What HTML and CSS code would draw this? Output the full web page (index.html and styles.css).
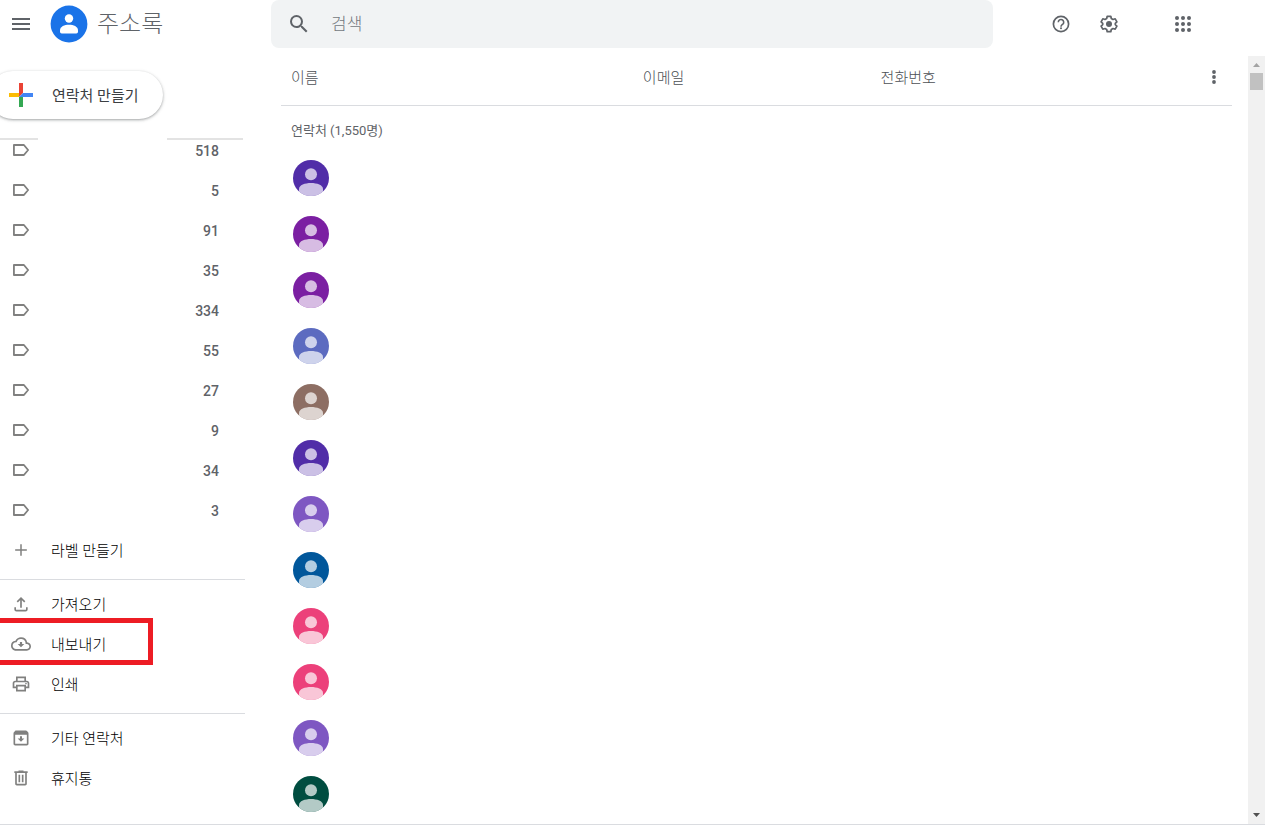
FILE: index.html
```html
<!DOCTYPE html>
<html lang="ko">
<head>
<meta charset="utf-8">
<title>주소록</title>
<link rel="stylesheet" href="styles.css">
</head>
<body>
<svg class="defs" aria-hidden="true">
  <symbol id="label" viewBox="0 0 24 24"><path d="M3.500 6h12L20.500 12l-5 6h-12z" fill="none" stroke="currentColor" stroke-width="2.200" stroke-linejoin="round"/></symbol>
  <symbol id="person" viewBox="0 0 36 36"><circle cx="18" cy="14.300" r="6"/><path d="M6 36v-7c0-4 6-6 12-6s12 2 12 6v7z"/></symbol>
</svg>
<div class="app">
  <header class="topbar">
    <div class="brand">
      <button class="icon-button" aria-label="기본 메뉴"><svg viewBox="0 0 24 24"><path d="M3 18h18v-2H3zm0-5h18v-2H3zm0-7v2h18V6z"/></svg></button>
      <svg class="logo" viewBox="0 0 38 38"><circle cx="19" cy="19" r="18.400" fill="#1a73e8"/><circle cx="19" cy="13.500" r="4.200" fill="#fff"/><path d="M10 25.500c0-4 4.500-5.700 9-5.700s9 1.700 9 5.700v1.300q0 1.700-1.700 1.700H11.700Q10 28.500 10 26.800z" fill="#fff"/></svg>
      <h1 class="title">주소록</h1>
    </div>
    <label class="search">
      <svg viewBox="0 0 24 24"><path d="M15.500 14h-.79l-.28-.27A6.471 6.471 0 0 0 16 9.500 6.500 6.500 0 1 0 9.500 16c1.610 0 3.090-.59 4.230-1.570l.27.28v.79l5 4.990L20.490 19zm-6 0C7.010 14 5 11.990 5 9.500S7.010 5 9.500 5 14 7.010 14 9.500 11.990 14 9.500 14z"/></svg>
      <input type="text" placeholder="검색" aria-label="검색">
    </label>
    <div class="actions">
      <button class="icon-button" aria-label="도움말"><svg viewBox="0 0 24 24"><circle cx="12" cy="12" r="7.600" fill="none" stroke="currentColor" stroke-width="1.700"/><path d="M9.300 10.200a2.700 2.700 0 1 1 4.500 2c-1.100.9-1.800 1.300-1.800 2.500" fill="none" stroke="currentColor" stroke-width="1.600"/><circle cx="12" cy="16.200" r="1"/></svg></button>
      <button class="icon-button" aria-label="설정"><svg viewBox="0 0 24 24"><path d="M10.200 4.300h3.600l.5 2.200 1.700 1 2.200-.7 1.700 3-1.600 1.500v1.400l1.600 1.500-1.700 3-2.200-.7-1.700 1-.5 2.200h-3.600l-.5-2.200-1.700-1-2.200.7-1.700-3 1.600-1.500v-1.400L4.100 9.800l1.700-3 2.200.7 1.700-1z" fill="none" stroke="currentColor" stroke-width="1.700" stroke-linejoin="round"/><circle cx="12" cy="12" r="3"/></svg></button>
      <button class="icon-button apps" aria-label="앱"><svg viewBox="0 0 24 24"><circle cx="6" cy="6" r="2"/><circle cx="12" cy="6" r="2"/><circle cx="18" cy="6" r="2"/><circle cx="6" cy="12" r="2"/><circle cx="12" cy="12" r="2"/><circle cx="18" cy="12" r="2"/><circle cx="6" cy="18" r="2"/><circle cx="12" cy="18" r="2"/><circle cx="18" cy="18" r="2"/></svg></button>
    </div>
  </header>

  <div class="body">
    <nav class="sidebar">
      <button class="create">
        <svg viewBox="0 0 24 24"><path fill="#ea4335" d="M10 0h4v10l-4 4z"/><path fill="#fbbc04" d="M0 10h10v4H0z"/><path fill="#4285f4" d="M14 10h10v4H10z"/><path fill="#34a853" d="M10 14h4v10h-4z"/></svg>
        <span class="text">연락처 만들기</span>
      </button>
      <div class="split-rule"><span class="rule-start"></span><span class="rule-end"></span></div>
      <div class="label-scroll">
        <ul class="menu labels">
          <li><a href="#"><svg><use href="#label"/></svg><span class="text count">518</span></a></li>
          <li><a href="#"><svg><use href="#label"/></svg><span class="text count">5</span></a></li>
          <li><a href="#"><svg><use href="#label"/></svg><span class="text count">91</span></a></li>
          <li><a href="#"><svg><use href="#label"/></svg><span class="text count">35</span></a></li>
          <li><a href="#"><svg><use href="#label"/></svg><span class="text count">334</span></a></li>
          <li><a href="#"><svg><use href="#label"/></svg><span class="text count">55</span></a></li>
          <li><a href="#"><svg><use href="#label"/></svg><span class="text count">27</span></a></li>
          <li><a href="#"><svg><use href="#label"/></svg><span class="text count">9</span></a></li>
          <li><a href="#"><svg><use href="#label"/></svg><span class="text count">34</span></a></li>
          <li><a href="#"><svg><use href="#label"/></svg><span class="text count">3</span></a></li>
          <li><a href="#"><svg viewBox="0 0 24 24"><path d="M19 12.900h-6.100V19h-1.800v-6.100H5v-1.800h6.100V5h1.800v6.100H19z"/></svg><span class="text">라벨 만들기</span></a></li>
        </ul>
      </div>
      <ul class="menu ruled">
        <li><a href="#"><svg viewBox="0 0 24 24"><path d="M12 16.500V5.500M7.500 9.500 12 5l4.500 4.500M5 16v2.500Q5 20 6.500 20h11q1.500 0 1.500-1.500V16" fill="none" stroke="currentColor" stroke-width="2"/></svg><span class="text">가져오기</span></a></li>
        <li class="marked"><a href="#"><svg viewBox="0 0 24 24"><path d="M19.350 10.040A7.490 7.490 0 0 0 12 4C9.110 4 6.600 5.640 5.350 8.040A5.994 5.994 0 0 0 0 14c0 3.310 2.690 6 6 6h13c2.760 0 5-2.240 5-5 0-2.640-2.050-4.780-4.650-4.960zM19 18H6c-2.210 0-4-1.790-4-4s1.790-4 4-4h.71a5.500 5.500 0 0 1 10.790 1.500v.5H19c1.660 0 3 1.340 3 3s-1.340 3-3 3z"/><path d="M10.700 9.500h2.600V12H16l-4 4-4-4h2.700z"/></svg><span class="text">내보내기</span></a></li>
        <li><a href="#"><svg viewBox="0 0 24 24"><path d="M19 8h-1V3H6v5H5c-1.660 0-3 1.340-3 3v6h4v4h12v-4h4v-6c0-1.660-1.340-3-3-3zM8 5h8v3H8zm8 14H8v-4h8zm2-4v-2H6v2H4v-4c0-.55.45-1 1-1h14c.55 0 1 .45 1 1v4z"/><circle cx="18" cy="11.500" r="1"/></svg><span class="text">인쇄</span></a></li>
      </ul>
      <ul class="menu ruled">
        <li><a href="#"><svg viewBox="0 0 24 24"><path d="m20.540 5.230-1.390-1.680A1.450 1.450 0 0 0 18 3H6c-.47 0-.88.21-1.160.55L3.460 5.230C3.170 5.570 3 6.020 3 6.500V19c0 1.100.9 2 2 2h14c1.100 0 2-.9 2-2V6.500c0-.48-.17-.93-.46-1.270zM19 19H5V8h14zM10.800 9.800h2.400v2.700H16l-4 4-4-4h2.800z"/></svg><span class="text">기타 연락처</span></a></li>
        <li><a href="#"><svg viewBox="0 0 24 24"><path d="M15 4V3H9v1H4v2h1v13c0 1.100.9 2 2 2h10c1.100 0 2-.9 2-2V6h1V4zm2 15H7V6h10zM9 8h2v9H9zm4 0h2v9h-2z"/></svg><span class="text">휴지통</span></a></li>
      </ul>
    </nav>

    <main class="contacts">
      <table>
        <thead>
          <tr><th class="col-name">이름</th><th class="col-email">이메일</th><th>전화번호</th><th class="col-more"><button class="icon-button" aria-label="더보기"><svg viewBox="0 0 24 24"><circle cx="12" cy="7" r="1.900"/><circle cx="12" cy="12" r="1.900"/><circle cx="12" cy="17" r="1.900"/></svg></button></th></tr>
        </thead>
        <tbody>
          <tr class="group"><th colspan="4">연락처 (1,550명)</th></tr>
          <tr><td colspan="4"><svg class="avatar indigo"><use href="#person"/></svg></td></tr>
          <tr><td colspan="4"><svg class="avatar purple"><use href="#person"/></svg></td></tr>
          <tr><td colspan="4"><svg class="avatar purple"><use href="#person"/></svg></td></tr>
          <tr><td colspan="4"><svg class="avatar blue"><use href="#person"/></svg></td></tr>
          <tr><td colspan="4"><svg class="avatar brown"><use href="#person"/></svg></td></tr>
          <tr><td colspan="4"><svg class="avatar indigo"><use href="#person"/></svg></td></tr>
          <tr><td colspan="4"><svg class="avatar violet"><use href="#person"/></svg></td></tr>
          <tr><td colspan="4"><svg class="avatar ocean"><use href="#person"/></svg></td></tr>
          <tr><td colspan="4"><svg class="avatar pink"><use href="#person"/></svg></td></tr>
          <tr><td colspan="4"><svg class="avatar pink"><use href="#person"/></svg></td></tr>
          <tr><td colspan="4"><svg class="avatar violet"><use href="#person"/></svg></td></tr>
          <tr><td colspan="4"><svg class="avatar green"><use href="#person"/></svg></td></tr>
        </tbody>
      </table>
    </main>
    <div class="scrollbar" aria-hidden="true">
      <svg class="arrow-up" viewBox="0 0 17 17"><path d="M5 11h7L8.500 7z"/></svg>
      <div class="thumb"></div>
      <svg class="arrow-down" viewBox="0 0 17 17"><path d="M5 6h7l-3.500 4z"/></svg>
    </div>
  </div>
</div>
</body>
</html>
```
FILE: styles.css
```css
* {
  box-sizing: border-box;
}

body {
  margin: 0;
  background: #fff;
  color: #000;
  font: 300 15px/20px Roboto, "Noto Sans CJK KR", sans-serif;
}

svg {
  display: block;
  flex: none;
  fill: currentColor;
}

.defs {
  position: absolute;
  width: 0;
  height: 0;
}

button {
  border: 0;
  padding: 0;
  background: none;
  font: inherit;
  color: inherit;
}

.icon-button {
  display: block;
  width: 24px;
  height: 24px;
  color: #5f6368;
}

.app {
  display: flex;
  flex-direction: column;
  min-height: 100vh;
  padding-bottom: 2px;
  overflow: hidden;
}

.topbar {
  display: flex;
  height: 56px;
  padding-bottom: 8px;
}

.brand {
  display: flex;
  align-items: center;
  width: 271px;
  padding-left: 9px;
}

.logo {
  width: 38px;
  height: 38px;
  margin: 0 9px 0 17px;
}

.title {
  margin: 0;
  color: #5f6368;
  font-size: 24px;
  font-weight: 300;
  line-height: 32px;
}

.search {
  display: flex;
  flex: 1;
  align-items: center;
  gap: 20px;
  padding: 0 16px;
  border-radius: 8px;
  background: #f1f3f4;
  color: #5f6368;
}

.search svg {
  width: 24px;
  height: 24px;
}

.search input {
  flex: 1;
  min-width: 0;
  padding: 0;
  border: 0;
  outline: 0;
  background: none;
  font: inherit;
  font-size: 17px;
  line-height: 24px;
}

.search input::placeholder {
  color: #73787d;
}

.actions {
  display: flex;
  align-items: center;
  gap: 24px;
  width: 272px;
  padding-left: 56px;
}

.apps {
  margin-left: 26px;
}

.body {
  display: flex;
  flex: 1;
  border-bottom: 1px solid #dadce0;
}

.sidebar {
  width: 245px;
  padding-top: 15px;
}

.create {
  display: flex;
  align-items: center;
  gap: 19px;
  height: 48px;
  margin-left: -11px;
  padding: 0 24px 0 20px;
  border-radius: 24px;
  background: #fff;
  box-shadow: 0 1px 2px rgba(60, 64, 67, .3), 0 1px 3px 1px rgba(60, 64, 67, .15);
  color: #3c4043;
  font-weight: 400;
}

.create svg {
  width: 24px;
  height: 24px;
}

.text {
  padding-top: 2px;
}

.split-rule {
  display: flex;
  justify-content: space-between;
  margin: 19px 2px 0 0;
}

.rule-start,
.rule-end {
  width: 38px;
  height: 2px;
  background: #e3e3e3;
}

.rule-end {
  width: 76px;
}

.label-scroll {
  overflow: hidden;
}

.menu {
  margin: 9px 0 0;
  padding: 0;
  list-style: none;
}

.menu.labels {
  margin-top: -10px;
}

.ruled {
  border-top: 1px solid #dadce0;
  padding-top: 4px;
}

.menu a {
  display: flex;
  align-items: center;
  gap: 20px;
  height: 40px;
  padding: 0 26px 0 11px;
  color: inherit;
  text-decoration: none;
}

.menu svg {
  width: 20px;
  height: 20px;
  color: #80807f;
}

.count {
  margin-left: auto;
  color: #5f6368;
  font-size: 14px;
  font-weight: 500;
}

.marked {
  position: relative;
}

/* Highlight frame drawn over the export entry */
.marked::after {
  content: "";
  position: absolute;
  box-sizing: border-box;
  top: -6px;
  left: -5px;
  width: 158px;
  height: 47px;
  border: 5px solid #ed1c24;
  pointer-events: none;
}

.contacts {
  flex: 1;
  padding: 0 16px 0 36px;
}

table {
  width: 100%;
  border-spacing: 0;
  table-layout: fixed;
}

th,
td {
  padding: 0 0 0 10px;
  text-align: left;
  font-weight: 300;
}

thead th {
  height: 50px;
  padding-bottom: 5px;
  border-bottom: 1px solid #dadce0;
  color: #4c5055;
}

thead .col-more {
  width: 41px;
  padding: 0 0 7px 11px;
}

.col-name {
  width: 37%;
}

.col-email {
  width: 25%;
}

.group th {
  height: 44px;
  padding-top: 6px;
  color: #5f6368;
  font-size: 13px;
  font-weight: 400;
}

td {
  height: 56px;
}

.avatar {
  width: 36px;
  height: 36px;
  margin-left: 2px;
  border-radius: 50%;
  color: rgba(255, 255, 255, .7);
}

.indigo { background: #512da8; }
.purple { background: #7b1fa2; }
.blue { background: #5c6bc0; }
.brown { background: #8d6e63; }
.violet { background: #7e57c2; }
.ocean { background: #01579b; }
.pink { background: #ec407a; }
.green { background: #004d40; }

.scrollbar {
  display: flex;
  flex-direction: column;
  width: 17px;
  background: #f1f1f1;
}

.scrollbar svg {
  width: 17px;
  height: 17px;
}

.thumb {
  height: 17px;
  margin: 0 2px;
  background: #c1c1c1;
}

.arrow-up {
  color: #a3a3a3;
}

.arrow-down {
  margin-top: auto;
  color: #505050;
}
```
